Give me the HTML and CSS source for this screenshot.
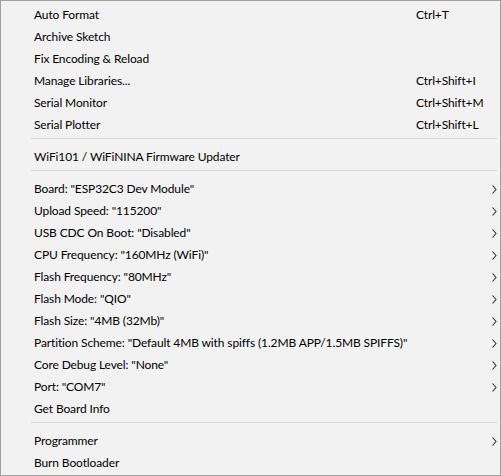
FILE: index.html
```html
<!DOCTYPE html>
<html>
<head>
<meta charset="utf-8">
<link rel="stylesheet" href="styles.css">
</head>
<body>
<div class="menu">
  <div class="item"><span class="label">Auto Format</span><span class="key">Ctrl+T</span></div>
  <div class="item"><span class="label">Archive Sketch</span></div>
  <div class="item"><span class="label">Fix Encoding &amp; Reload</span></div>
  <div class="item"><span class="label">Manage Libraries...</span><span class="key">Ctrl+Shift+I</span></div>
  <div class="item"><span class="label">Serial Monitor</span><span class="key">Ctrl+Shift+M</span></div>
  <div class="item"><span class="label">Serial Plotter</span><span class="key">Ctrl+Shift+L</span></div>
  <div class="sep"></div>
  <div class="item"><span class="label">WiFi101 / WiFiNINA Firmware Updater</span></div>
  <div class="sep"></div>
  <div class="item sub"><span class="label">Board: "ESP32C3 Dev Module"</span><svg class="arrow" width="5" height="9" viewBox="0 0 5 9"><path d="M0.5 0.5 L4 4.5 L0.5 8.5" fill="none" stroke="#333" stroke-width="1.1"/></svg></div>
  <div class="item sub"><span class="label">Upload Speed: "115200"</span><svg class="arrow" width="5" height="9" viewBox="0 0 5 9"><path d="M0.5 0.5 L4 4.5 L0.5 8.5" fill="none" stroke="#333" stroke-width="1.1"/></svg></div>
  <div class="item sub"><span class="label">USB CDC On Boot: "Disabled"</span><svg class="arrow" width="5" height="9" viewBox="0 0 5 9"><path d="M0.5 0.5 L4 4.5 L0.5 8.5" fill="none" stroke="#333" stroke-width="1.1"/></svg></div>
  <div class="item sub"><span class="label">CPU Frequency: "160MHz (WiFi)"</span><svg class="arrow" width="5" height="9" viewBox="0 0 5 9"><path d="M0.5 0.5 L4 4.5 L0.5 8.5" fill="none" stroke="#333" stroke-width="1.1"/></svg></div>
  <div class="item sub"><span class="label">Flash Frequency: "80MHz"</span><svg class="arrow" width="5" height="9" viewBox="0 0 5 9"><path d="M0.5 0.5 L4 4.5 L0.5 8.5" fill="none" stroke="#333" stroke-width="1.1"/></svg></div>
  <div class="item sub"><span class="label">Flash Mode: "QIO"</span><svg class="arrow" width="5" height="9" viewBox="0 0 5 9"><path d="M0.5 0.5 L4 4.5 L0.5 8.5" fill="none" stroke="#333" stroke-width="1.1"/></svg></div>
  <div class="item sub"><span class="label">Flash Size: "4MB (32Mb)"</span><svg class="arrow" width="5" height="9" viewBox="0 0 5 9"><path d="M0.5 0.5 L4 4.5 L0.5 8.5" fill="none" stroke="#333" stroke-width="1.1"/></svg></div>
  <div class="item sub"><span class="label">Partition Scheme: "Default 4MB with spiffs (1.2MB APP/1.5MB SPIFFS)"</span><svg class="arrow" width="5" height="9" viewBox="0 0 5 9"><path d="M0.5 0.5 L4 4.5 L0.5 8.5" fill="none" stroke="#333" stroke-width="1.1"/></svg></div>
  <div class="item sub"><span class="label">Core Debug Level: "None"</span><svg class="arrow" width="5" height="9" viewBox="0 0 5 9"><path d="M0.5 0.5 L4 4.5 L0.5 8.5" fill="none" stroke="#333" stroke-width="1.1"/></svg></div>
  <div class="item sub"><span class="label">Port: "COM7"</span><svg class="arrow" width="5" height="9" viewBox="0 0 5 9"><path d="M0.5 0.5 L4 4.5 L0.5 8.5" fill="none" stroke="#333" stroke-width="1.1"/></svg></div>
  <div class="item"><span class="label">Get Board Info</span></div>
  <div class="sep"></div>
  <div class="item sub"><span class="label">Programmer</span><svg class="arrow" width="5" height="9" viewBox="0 0 5 9"><path d="M0.5 0.5 L4 4.5 L0.5 8.5" fill="none" stroke="#333" stroke-width="1.1"/></svg></div>
  <div class="item"><span class="label">Burn Bootloader</span></div>
</div>
</body>
</html>
```
FILE: styles.css
```css
html, body {
  margin: 0;
  padding: 0;
  background: #f2f2f2;
}
.menu {
  box-sizing: border-box;
  width: 501px;
  height: 476px;
  background: #f2f2f2;
  border: 1px solid #a0a0a0;
  padding: 3px 0 1px 0;
  font-family: "Lato", "Noto Sans", sans-serif;
  font-size: 12px;
  letter-spacing: -0.12px;
  color: #000;
}
.item {
  position: relative;
  height: 22px;
  line-height: 22px;
  display: flex;
  align-items: center;
  padding-left: 33px;
  white-space: nowrap;
}
.label {
  flex: 1;
}
.key {
  position: absolute;
  left: 415px;
  top: 0;
}
.arrow {
  position: absolute;
  left: 491px;
  top: 7px;
}
.sep {
  height: 10px;
  box-sizing: border-box;
  padding-top: 2px;
  margin-left: 30px;
  margin-right: 3px;
}
.sep::before {
  content: "";
  display: block;
  height: 1px;
  background: #d7d7d7;
}
```
